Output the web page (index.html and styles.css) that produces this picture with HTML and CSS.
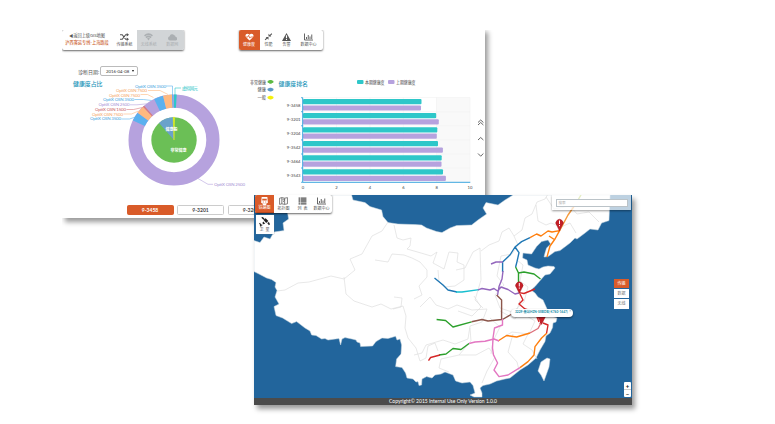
FILE: index.html
```html
<!DOCTYPE html>
<html lang="zh-CN">
<head>
<meta charset="utf-8">
<title>GIS</title>
<link rel="stylesheet" href="styles.css">
</head>
<body>
<main class="desktop">
<section class="window health">
  <header class="bars">
    <nav class="toolbar crumb">
      <div class="path"><span>◀返回上级GIS地图</span><b>沪西客运专线-上海路段</b></div>
      <div class="tool systems"><svg class="icon" viewBox="0 0 16 14"><path d="M0 3h4l6 8h4M0 11h4l6-8h4" fill="none" stroke="currentColor" stroke-width="2"/><path d="M12 0l4 3-4 3zM12 8l4 3-4 3z"/></svg><span>传输系统</span></div>
      <div class="tool off"><svg class="icon" viewBox="0 0 16 14"><path d="M1 5q7-6 14 0M3.500 8q4.500-4 9 0" fill="none" stroke="currentColor" stroke-width="2.800"/><path d="M5.500 9.500q2.500-2 5 0L8 13z"/></svg><span>无线系统</span></div>
      <div class="tool off"><svg class="icon" viewBox="0 0 16 14"><path d="M3.500 13a3.800 3.800 0 0 1-.5-7.500A4.500 4.500 0 0 1 11 4a3 3 0 0 1 2.500 3 3 3 0 0 1 0 6z"/></svg><span>数据网</span></div>
    </nav>
    <nav class="toolbar tabs">
      <div class="tool active"><svg class="icon" viewBox="0 0 16 14"><path d="M8 13L1.500 7C-1 3 4-1 8 3c4-4 9 0 6.500 4z"/><path d="M1 7h4l1.500-3 2 5L10 7h5" fill="none" stroke="#d95b29" stroke-width="1.300"/></svg><span>健康度</span></div>
      <div class="tool"><svg class="icon" viewBox="0 0 16 14"><path d="M2 12l4-4M10 5l4-4" stroke="currentColor" stroke-width="2"/><path d="M3 7h5v5zM8 1v5h5z"/></svg><span>性能</span></div>
      <div class="tool"><svg class="icon" viewBox="0 0 16 14"><path d="M8 0l8 14H0z"/><path d="M8 4v5M8 10.500v2" stroke="#fff" stroke-width="2"/></svg><span>告警</span></div>
      <div class="tool wide"><svg class="icon" viewBox="0 0 18 14"><path d="M1 0v13h17M5 11V7M8.500 11V3M12 11V6M15.500 11V2" fill="none" stroke="currentColor" stroke-width="1.800"/></svg><span>数据中心</span></div>
    </nav>
  </header>
  <div class="date"><label>诊断日期:</label><div class="select">2016-04-08<i></i></div></div>
  <div class="charts">
    <svg class="donut" viewBox="62 78 188 122" width="188" height="122">
      <text x="73" y="86.300" class="heading" textLength="29.500" lengthAdjust="spacingAndGlyphs">健康度占比</text>
      <g fill="none" stroke-width="13.200" transform="rotate(-90 174 140)">
        <circle cx="174" cy="140" r="38.900" stroke="#b6a2de"/>
        <circle cx="174" cy="140" r="38.900" pathLength="360" stroke="#5ab1ef" stroke-dasharray="11.500 348.500" stroke-dashoffset="-295.500"/>
        <circle cx="174" cy="140" r="38.900" pathLength="360" stroke="#ffb980" stroke-dasharray="10 350" stroke-dashoffset="-307"/>
        <circle cx="174" cy="140" r="38.900" pathLength="360" stroke="#d87a80" stroke-dasharray="2 358" stroke-dashoffset="-317"/>
        <circle cx="174" cy="140" r="38.900" pathLength="360" stroke="#5ab1ef" stroke-dasharray="12 348" stroke-dashoffset="-334"/>
        <circle cx="174" cy="140" r="38.900" pathLength="360" stroke="#ffb980" stroke-dasharray="11.500 348.500" stroke-dashoffset="-346"/>
        <circle cx="174" cy="140" r="38.900" pathLength="360" stroke="#5ab1ef" stroke-dasharray="1.500 358.500" stroke-dashoffset="-357.500"/>
        <circle cx="174" cy="140" r="38.900" pathLength="360" stroke="#2ec7c9" stroke-dasharray="3.500 356.500" stroke-dashoffset="0"/>
      </g>
      <circle cx="174" cy="140" r="22.700" fill="#6bbf56"/>
      <path d="M174 140L159 123A22.700 22.700 0 0 1 173.200 117.300z" fill="#6aa2cb"/>
      <path d="M174 140L173.200 117.300H174.600z" fill="#e8f01c" stroke="#e8f01c" stroke-width=".5"/>
      <g class="pie-label"><text x="171.500" y="130.800">健康般</text><text x="178.500" y="152.300" textLength="16" lengthAdjust="spacingAndGlyphs">非常健康</text></g>
      <g fill="none" stroke-width=".6">
        <path d="M166 86h6.500v9" stroke="#5ab1ef"/><path d="M148 90.500h12l8 4" stroke="#ffb980"/>
        <path d="M140.500 94.500h7l6 3" stroke="#ffb980"/><path d="M134.500 99.500h9l8 1" stroke="#5ab1ef"/>
        <path d="M130 104.800h7l10-1" stroke="#b6a2de"/><path d="M126.500 109.500h7l9-2" stroke="#d87a80"/>
        <path d="M123.500 114h8l7-3" stroke="#ffb980"/><path d="M121.500 119h8l6-2" stroke="#5ab1ef"/>
        <path d="M175 95v-7h6" stroke="#2ec7c9"/><path d="M198 178.500l10 5.800h5" stroke="#b6a2de"/>
      </g>
      <g class="slice" text-anchor="end">
        <text x="166" y="87.800" fill="#3f9fde" textLength="31">OptiX OSN 3500</text>
        <text x="147" y="92.300" fill="#f5a35f" textLength="31">OptiX OSN 7500</text>
        <text x="140" y="96.900" fill="#f5a35f" textLength="31">OptiX OSN 7500</text>
        <text x="134" y="101.400" fill="#3f9fde" textLength="31">OptiX OSN 3500</text>
        <text x="129.500" y="106.400" fill="#a58fd4" textLength="31">OptiX OSN 2500</text>
        <text x="126" y="111" fill="#c9565e" textLength="31">OptiX OSN 1500</text>
        <text x="123" y="115.600" fill="#f5a35f" textLength="31">OptiX OSN 7500</text>
        <text x="121" y="120.300" fill="#3f9fde" textLength="31">OptiX OSN 3500</text>
        <text x="245" y="186" fill="#a58fd4" textLength="31">OptiX OSN 2500</text>
        <text x="198" y="89.600" fill="#2ec7c9" textLength="16">虚拟网元</text>
      </g>
    </svg>
    <svg class="ranking" viewBox="250 78 235 122" width="235" height="122">
      <g class="tiny" text-anchor="end"><text x="266" y="83.600" textLength="16" lengthAdjust="spacingAndGlyphs">非常健康</text><text x="266" y="91.400">健康</text><text x="266" y="99.400">一般</text></g>
      <g><rect x="267.500" y="80.500" width="6" height="2.600" rx="1.300" fill="#5db944"/><rect x="269" y="80" width="3" height="3.800" rx="1" fill="#5db944"/><rect x="267.500" y="88.300" width="6" height="2.600" rx="1.300" fill="#5a98c8"/><rect x="269" y="87.800" width="3" height="3.800" rx="1" fill="#5a98c8"/><rect x="267.500" y="96.300" width="6" height="2.600" rx="1.300" fill="#f4f00c"/><rect x="269" y="95.800" width="3" height="3.800" rx="1" fill="#f4f00c"/></g>
      <text x="278.500" y="86.300" class="heading" textLength="29.500" lengthAdjust="spacingAndGlyphs">健康度排名</text>
      <rect x="357" y="80" width="6.500" height="4" rx="1" fill="#2ec7c9"/><rect x="388" y="80" width="6.500" height="4" rx="1" fill="#b6a2de"/>
      <g class="tiny"><text x="365" y="83.600" textLength="19.500" lengthAdjust="spacingAndGlyphs">本期健康度</text><text x="396" y="83.600" textLength="19.500" lengthAdjust="spacingAndGlyphs">上期健康度</text></g>
      <rect x="436" y="97.500" width="34" height="84.500" fill="#f9f9f9"/>
      <path d="M303 97.500h167M303 111.700h167M303 125.800h167M303 139.900h167M303 154h167M303 168h167M336.500 97.500V182M370 97.500V182M403.300 97.500V182M436.500 97.500V182M470 97.500V182" stroke="#f1f1f1" stroke-width=".6"/>
      <g fill="#2ec7c9"><rect x="303" y="99" width="118.500" height="5.200" rx="1"/><rect x="303" y="113.100" width="133.200" height="5.200" rx="1"/><rect x="303" y="127.200" width="134.300" height="5.200" rx="1"/><rect x="303" y="141" width="135" height="5.200" rx="1"/><rect x="303" y="155.200" width="138.700" height="5.200" rx="1"/><rect x="303" y="169.200" width="140" height="5.200" rx="1"/></g>
      <g fill="#b6a2de"><rect x="303" y="105.400" width="118" height="5.200" rx="1"/><rect x="303" y="119.300" width="135.800" height="5.200" rx="1"/><rect x="303" y="133.600" width="133.800" height="5.200" rx="1"/><rect x="303" y="147.600" width="139.900" height="5.200" rx="1"/><rect x="303" y="161.600" width="138.500" height="5.200" rx="1"/><rect x="303" y="175.700" width="142.900" height="5.200" rx="1"/></g>
      <path d="M302.700 97.700V182.300H470.300M301.200 97.700h1.500M301.200 111.700h1.500M301.200 125.800h1.500M301.200 139.900h1.500M301.200 154h1.500M301.200 168h1.500M301.200 182.300h1.500" fill="none" stroke="#3ba5de"/>
      <g class="tiny" text-anchor="end"><text x="300.500" y="106.500">9-3458</text><text x="300.500" y="120.600">9-3201</text><text x="300.500" y="134.700">9-3204</text><text x="300.500" y="148.700">9-3542</text><text x="300.500" y="162.800">9-3464</text><text x="300.500" y="176.800">9-3543</text></g>
      <g class="tiny" text-anchor="middle"><text x="303" y="189.200">0</text><text x="336.500" y="189.200">2</text><text x="370" y="189.200">4</text><text x="403.500" y="189.200">6</text><text x="436.700" y="189.200">8</text><text x="470" y="189.200">10</text></g>
      <path d="M478 122.500l2.700-2.500 2.700 2.500M478 125l2.700-2.500 2.700 2.500M478 140l2.700-2.500 2.700 2.500M478 153.500l2.700 2.700 2.700-2.700" fill="none" stroke="#555" stroke-width=".9"/>
    </svg>
  </div>
  <div class="stations"><span class="on">9-3458</span><span>9-3201</span><span>9-3204</span></div>
</section>

<section class="window gis">
  <div class="map">
    <svg viewBox="254 195 378 203" width="378" height="203">
      <path class="land" d="M298.700 195L297 208 287.600 213 288.600 219 283 223 284 230.600 274 232 270 239 264 237 260 242.600 254 240.600V271.600L259 274 266.600 278 271.600 279.500 276 282.600 275 287 277 290.600 275 297 279 304 274 306.600 276 315.600 282.600 318 291.600 323.600 296.600 321.600 305 328 310 331 311.600 335 316 335.500 321.600 339 325 338.500 328 340 339 338.500 340.600 345 342 339 345 337.600 352 339 356 340 357 342 360 343 360.600 346.600 372.600 346 376 341.600 382 338 388 338.500 395.600 336.300 397 340 400 339 401.600 345 401 354 396.600 359 395.600 366.600 402 367.600 405.600 373 407 378 413 379 416 382 418 381.600 419 385.600 421.600 385 422 379 426.600 376.600 432 378 435 375 441 374 445 372 453 375 455.600 381 462 383 470 382 473 385.600 475 393 470 395 474 397 482 397 482 393 480 388 483 385.600 490 384 496.600 381 505 379 510 378 520 370 528 365 536 358 540 350 545 341.600 546 336 550 333 552.600 327.600 553 323 556 322 557 318 550 315.600 546.600 308 543 300 538 297 535 293 531 290 535 286.600 540.600 280 545 275 550 274 555 268 554 266.500 548 266 543 267 539 269 535 268 528 265 527 260 522.600 258 523 253 531.600 254 536.600 246.600 541.600 241.600 548 240 550.600 244 546.600 248 545 253 544 257 548 256.600 555 251.600 560 250.600 570 243 575 238 577 239 585 233 590 229 598 230 601.600 223 609 220.600 610 195H513L505 200 498 205 486 202.600 483 208 486.600 214 478 220 471.600 225 456.600 225.600 450 228 442 232.600 436.600 231.600 426.600 228 421.600 225 415 224.600 398 224 388 222.600 383 216.600 381.600 210 370 206.600 365 202.600 353 200 351.600 195z"/>
      <path class="land" d="M547 358l3 1-1 8-5 14-3-6-3-4 3-9z"/>
      <path class="province" d="M388 222l-6 9-10 5-10 18-12 5 5 11-11 9-13-3-22 6-11 1-13 7-8 1M344 277l2 17 8 7 18 6 9-3 10 5 12-3 3 10-1 12 3 10 8 10 4 13 6-3 2-12 7-3 3 8M375 260l13 2 4-8 12 1 8 3 8 4 7 8 0 7-8 9 3 9-8 4M394 225l3 13 6 2 8-2-1 8-3 3 14 4 10 3 6-4-4 11 11 6 5-17 9 1-1 9 7 3 0 15-9 6-10 1-6-5-1-12M456 270l9-2 8-16 7-4 1 32-6 20 8 8M481 251l8-6 10-4 3-9 7-4 5 8 8-6 3-12 7-4 5-12 8-3 3-5M514 236l4 9-6 9-11 2-4 20 7 9-9 10 5 13 12 4M517 260l6 5-3 16 8 6-4 15-8 7M536 205l2 16 8 4 5-2 10 4 9-4 6 10M546 197l8 12 16-3 7 8 12-2 10 10M420 307l10-10 6 8 12 4 9-4 15 5 15-1-5 13-12 4-2 13-13 5-12-4-17 5-4 8-8 2M470 328l1 13-12 14-18 4-2 9 10 4M459 355l17 0 13-7 6 9-8 14-5 12M500 311l15 8 5-7 15 9-6 13-17-2-10 6M529 332l-6 12 9 6 5 9M513 334l-5 18 9 10 2 8M394 297l8 1-1 9-8 2M490 318l10 9-7 14-2 13M520 300l-3 10-6 5M474 296l7 11-9 9-14-5"/>
      <g class="rail">
        <path stroke="#1f77b4" d="M434.500 278L443 285 448 290 457 292M530 237.600L521.600 241.600 515 247 510 255 502.600 262V272M515 247L519 252.600 517 261.600 515.600 267"/>
        <path stroke="#17becf" d="M456 292L462 292 479 289.600"/>
        <path stroke="#9467bd" d="M478 289.800L482 288.500 490 290 494 288.500 497.500 291 501 287 508 289.500 515 294 519 293M491 264L496 262 503 262M503 271L502 279 499 286.600 497.600 295"/>
        <path stroke="#2ca02c" d="M515.600 267L518.500 273V290M518.500 273L524 272 534 274 540.500 279M436.600 319.500L445.600 320.500 453 327 471.600 321.800M439 355L446 354 453 348.500 461 349.500 469 343.500"/>
        <path stroke="#ff7f0e" d="M530 237.600L536.600 234 541 236 548 231 552 232 559.600 230.600 555 239 550 246 547 257M549 236L555 240M498 341L506.600 335.500 516.600 337 530 333M547 333L541.600 338 535 346.600 534 355 528 361.600 520 367.600"/>
        <path stroke="#f59a3c" d="M559.600 230.600L568 215 575 205"/><path stroke="#a8c43c" d="M575 205L581 195"/>
        <path stroke="#8c564b" d="M496.600 295L501.600 300V319.500L488 321 482 319.500 471.600 321.800M501.600 320L512 314"/>
        <path stroke="#e377c2" d="M469 343.500L475 342 485 341.300 494 339 499 341M502.500 319V325L494.500 328 493 338 492.500 348 493.500 355 497.600 363 494 370 499 376.600 508 375 520 367.600"/>
        <path stroke="#d62728" d="M428.500 360.600L430.600 357.500 440 355M519 292.600L524 293.500 535 289M520 294L523 300 519 304 525 309 535 312 539 322M546.600 333L548 325 543 323M544 315L540 324"/>
        <path stroke="#dd6f7a" d="M530 333L538 328.500 541 323"/>
      </g>
      <g fill="#c51f28" stroke="#a0181f" stroke-width=".5"><path d="M559.500 231l-2.600-5.500a3.600 3.600 0 1 1 5.200 0zM519.300 293.500l-2.600-5.500a3.600 3.600 0 1 1 5.200 0zM541.600 324.500l-2.600-5.500a3.600 3.600 0 1 1 5.200 0z"/></g>
      <path d="M559.500 220.500v3.500M559.500 225v1.200M519.300 283v3.500M519.300 287.500v1.200" stroke="#fff" stroke-width="1"/>
    </svg>
    <nav class="toolbar map-tools">
      <div class="tool active"><svg class="icon" viewBox="0 0 16 14"><path d="M3 0h10l1 10-3 2H5l-3-2z"/><path d="M4 3h8v3H4zM5 8h1.500v1.500H5zM9.500 8H11v1.500H9.500z" fill="#d95b29"/><path d="M4 14l2-2h4l2 2z"/></svg><span>铁路图</span></div>
      <div class="tool"><svg class="icon" viewBox="0 0 16 14"><path d="M1 2l4-1 5 1 5-1v11l-5 1-5-1-4 1zM5 1v11M10 2v11M6 5q3-3 4 0l-3 4" fill="none" stroke="currentColor" stroke-width="1.300"/></svg><span>拓扑图</span></div>
      <div class="tool"><svg class="icon" viewBox="0 0 16 14"><path d="M1 2h14M1 5.300h14M1 8.600h14M1 12h14" stroke="currentColor" stroke-width="2.400"/><path d="M4.500 0v14" stroke="#fff"/></svg><span>列&nbsp; 表</span></div>
      <div class="tool"><svg class="icon" viewBox="0 0 18 14"><path d="M1 0v13h17M5 11V7M8.500 11V3M12 11V6M15.500 11V2" fill="none" stroke="currentColor" stroke-width="1.800"/></svg><span>数据中心</span></div>
    </nav>
    <div class="satellite"><svg viewBox="0 0 20 18"><path d="M8 5l4-3 5 5-4 4z"/><path d="M4 1l3-1 3 3-2 2zM15 11l3-2 2 4-2 2zM8 8l3 4-3 1-2-2z"/><path d="M1 11l2 3 3 1M2 15l2 2" fill="none" stroke="#222" stroke-width="2"/></svg><span>卫&nbsp; 星</span></div>
    <div class="search"><div>搜索</div></div>
    <div class="layers"><span class="on">传输</span><span>数据</span><span>无线</span></div>
    <div class="tip"><span>3229-基站HZN-SXBDB(-K760-1647)</span><i>×</i></div>
    <div class="zoom"><b>+</b><b>−</b></div>
  </div>
  <footer>Copyright© 2015 Internal Use Only Version 1.0.0</footer>
</section>
</main>
</body>
</html>
```
FILE: styles.css
```css
* { box-sizing: border-box; }
body { margin: 0; background: #fff; font-family: Lato, "Noto Sans CJK SC", sans-serif; color: #555; }
.desktop { position: relative; width: 775px; height: 424px; overflow: hidden; }
.window { position: absolute; }
.health { left: 62px; top: 28px; width: 423px; height: 190px; background: #fff; box-shadow: 3px 4px 5px rgba(0,0,0,.4); clip-path: inset(2px -14px -14px 0); }
.gis { left: 254px; top: 195px; width: 378px; height: 210px; box-shadow: 3px 4px 5px rgba(0,0,0,.4); }
.bars { display: flex; gap: 54.5px; height: 38px; padding-top: 2px; }
.toolbar { display: flex; height: 19.5px; background: #fff; border-radius: 2px; box-shadow: 0 .5px 2px rgba(0,0,0,.6); overflow: hidden; }
.crumb { width: 122px; }
.tabs { width: 84px; }
.path { width: 50px; display: flex; flex-direction: column; align-items: center; justify-content: center; gap: 1.2px; font-size: 4.2px; line-height: 6px; white-space: nowrap; }
.path b { color: #cc6332; font-weight: 500; }
.tool { width: 18px; display: flex; flex-direction: column; align-items: center; justify-content: center; gap: .5px; font-size: 4px; line-height: 5px; color: #555; white-space: nowrap; }
.icon { width: 9px; height: 8px; fill: currentColor; }
.systems { width: 25px; }
.crumb .off { width: 23.5px; background: #d2d5d7; color: #abafb2; }
.tool.active { width: 21px; background: #d95b29; color: #fff; }
.tool.wide { width: 26px; }
.date { display: flex; align-items: center; height: 10px; padding-left: 16px; gap: 2px; font-size: 5px; }
.date label { width: 20px; white-space: nowrap; }
.select { display: flex; justify-content: space-between; align-items: center; width: 38px; height: 10px; padding: 0 3px 0 5px; border: .8px solid #bbb; border-radius: 2px; font-size: 4.3px; color: #333; }
.select i { border: 1.3px solid transparent; border-top: 2.2px solid #111; border-bottom: 0; }
.charts { display: flex; margin-top: 2px; height: 122px; }
.heading { font-size: 6px; font-weight: 500; fill: #2294b8; }
.slice { font-size: 4.4px; }
.pie-label { font-size: 4px; font-weight: 700; fill: #fff; text-anchor: middle; }
.tiny { font-size: 4.2px; fill: #444; }
.stations { display: flex; gap: 3.5px; padding: 4.7px 0 0 64.5px; }
.stations span { width: 47px; height: 10.5px; border: .8px solid #ccc; border-radius: 1.5px; font-size: 5px; font-weight: 700; line-height: 9px; text-align: center; color: #444; }
.stations .on { background: #d95b29; border-color: #d95b29; color: #fff; }
.map { position: relative; height: 203px; background: #22659c; overflow: hidden; }
.map > svg { display: block; }
.land { fill: #fff; stroke: #c9d6df; stroke-width: .5; }
.province { fill: none; stroke: #dedede; stroke-width: .7; stroke-linejoin: round; }
.rail { fill: none; stroke-width: 1.4; stroke-linejoin: round; }
.map-tools { position: absolute; left: 1px; top: 0; width: 77px; height: 17.5px; }
.map-tools .tool, .map-tools .tool.active { width: 19px; }
.map-tools .tool.active { border-bottom: .5px solid #b94a20; }
.satellite { position: absolute; left: 1.5px; top: 20px; width: 18px; height: 19px; background: #fff; display: flex; flex-direction: column; align-items: center; justify-content: center; font-size: 4px; line-height: 5px; box-shadow: 0 0 1px #678; }
.satellite svg { width: 11px; height: 10px; fill: #222; }
.search { position: absolute; right: 1px; top: 0; width: 79px; height: 14.5px; padding: 3.5px; background: rgba(255,255,255,.7); box-shadow: 0 1px 2px rgba(0,0,0,.4); }
.search div { height: 8px; padding-left: 2px; background: #fff; border: .8px solid #bbc3c8; font-size: 3.6px; line-height: 6px; color: #aaa; }
.layers { position: absolute; left: 360px; top: 84px; width: 15px; }
.layers span { display: block; height: 9.4px; margin-bottom: .7px; background: #fff; font-size: 4px; line-height: 9px; text-align: center; color: #777; }
.layers .on { background: #d95b29; color: #fff; }
.tip { position: absolute; left: 257px; top: 114px; width: 61.5px; height: 7.5px; border-radius: 4px; background: #fff; box-shadow: 0 1px 2px rgba(0,0,0,.5); display: flex; justify-content: space-between; padding: 0 1.5px 0 4px; font-size: 3.2px; line-height: 7.5px; color: #158aa5; font-weight: 700; white-space: nowrap; }
.tip i { font-style: normal; line-height: 5px; color: #999; }
.zoom { position: absolute; left: 370px; top: 187px; width: 7px; height: 14.5px; background: #fff; border-radius: 1px; }
.zoom b { display: block; height: 7.2px; font-size: 6px; line-height: 7px; text-align: center; color: #111; }
.zoom b + b { border-top: .5px solid #ccc; }
footer { height: 7px; background: #4b4b4b; color: #fff; font-size: 5px; line-height: 7px; text-align: center; }
```
